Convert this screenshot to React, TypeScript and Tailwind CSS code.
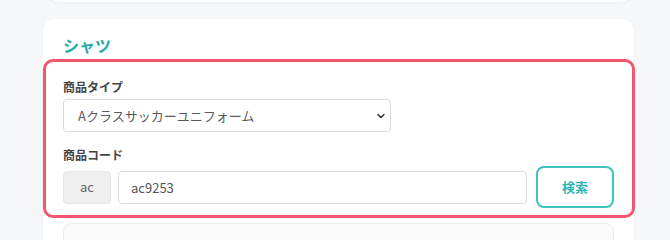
import { ChevronDown } from "lucide-react";

const font = { fontFamily: '"Noto Sans CJK JP", "Noto Sans", sans-serif' };

const App = () => {
  return (
    <div
      className="h-[240px] w-[670px] overflow-hidden bg-[#f6f7f9]"
      style={font}
    >
      {/* previous card, only its bottom edge shows */}
      <div className="ml-[47px] -mt-[38px] h-[40px] w-[586px] rounded-xl bg-white shadow-[0_1px_3px_rgba(0,0,0,0.05)]" />

      {/* main card */}
      <div className="ml-[43px] mt-[17px] w-[591px] rounded-xl bg-white pb-6 shadow-[0_1px_3px_rgba(0,0,0,0.04)]">
        <h2 className="px-5 pt-[15px] text-[16px] font-bold leading-[22px] text-[#27aaa5]">
          シャツ
        </h2>

        <div className="mt-[3px] -mr-px rounded-[10px] border-[3px] border-[#f4566f] px-[17px] pt-[16px] pb-[7px]">
          <label className="block text-[12px] font-bold leading-[18px] text-[#444]">
            商品タイプ
          </label>
          <div className="relative mt-[3px] w-[328px]">
            <select className="h-[33px] w-full appearance-none rounded border border-[#dcdcdc] bg-white pl-[14px] text-[13px] text-[#5a5a5a]">
              <option>Aクラスサッカーユニフォーム</option>
            </select>
            <ChevronDown
              className="pointer-events-none absolute right-[4px] top-1/2 h-[12px] w-[12px] -translate-y-1/2 text-[#333]"
              strokeWidth={3}
            />
          </div>

          <label className="mt-[14px] block text-[12px] font-bold leading-[18px] text-[#444]">
            商品コード
          </label>
          <div className="mt-[2px] flex items-center">
            <div className="flex h-[33px] w-[48px] items-center justify-center rounded border border-[#e6e6e6] bg-[#efefef] text-[13px] text-[#666]">
              ac
            </div>
            <input
              readOnly
              value="ac9253"
              className="ml-[7px] h-[33px] w-[409px] rounded border border-[#dcdcdc] bg-white px-3 text-[13px] text-[#555] outline-none"
            />
            <button className="ml-[9px] h-[42px] w-[78px] rounded-lg border-2 border-[#3cc4be] bg-white text-[13px] font-bold text-[#2fb3ad]">
              検索
            </button>
          </div>
        </div>

        {/* next block, cut off */}
        <div className="mx-5 mt-[5px] h-[40px] rounded-lg border border-[#ececec] bg-[#fafafa]" />
      </div>
    </div>
  );
};

export default App;
